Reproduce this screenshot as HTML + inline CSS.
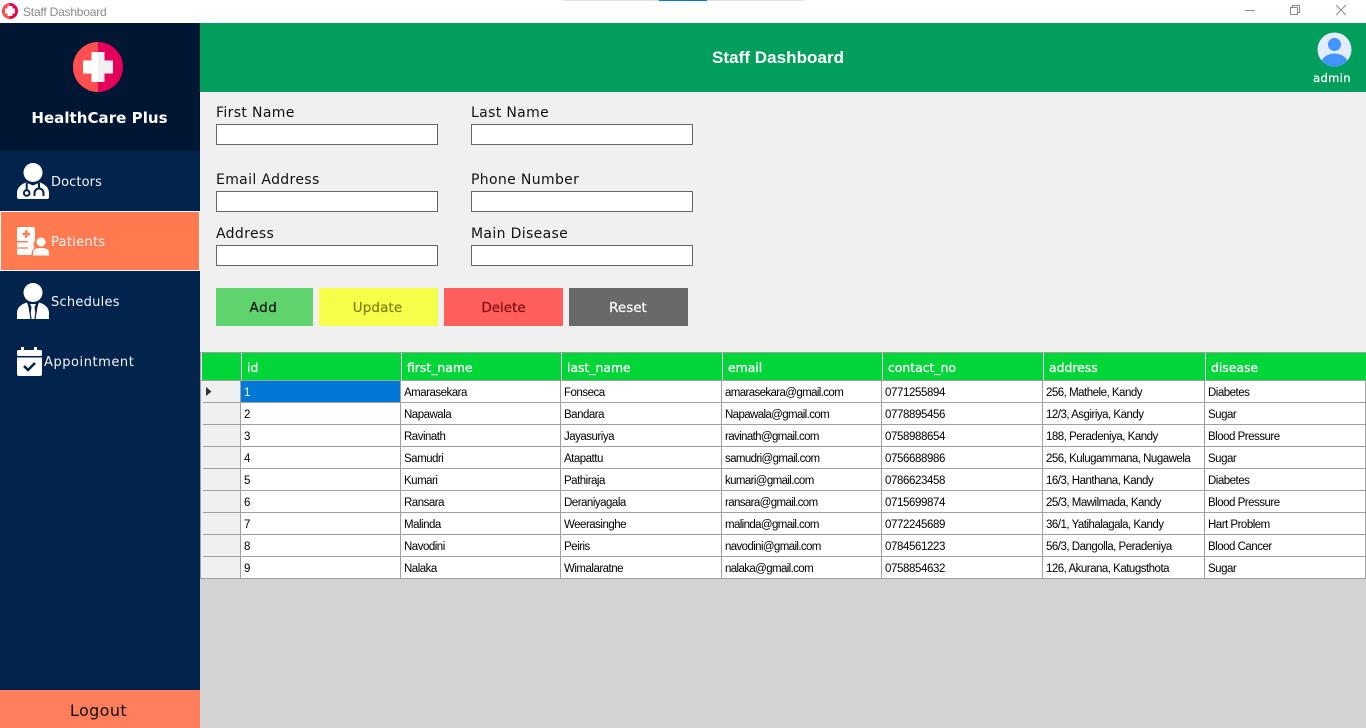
<!DOCTYPE html>
<html><head><meta charset="utf-8"><title>Staff Dashboard</title>
<style>
*{box-sizing:border-box}
html,body{margin:0;padding:0;width:1366px;height:728px;overflow:hidden;background:#fff}
body{position:relative;font-family:"DejaVu Sans","Liberation Sans",sans-serif}
.a{position:absolute;white-space:nowrap}
.lb{position:absolute;white-space:nowrap;font-size:14px;line-height:18px;color:#111;letter-spacing:.35px}
.in{position:absolute;width:222px;height:21px;background:#fff;border:1px solid #666}
.btn{position:absolute;top:288px;height:38px;text-align:center;font-size:13.5px;line-height:40px;-webkit-text-stroke:.2px currentColor}
.nav{position:absolute;left:51px;color:#f4f6fa;font-size:13px;line-height:18px;white-space:nowrap;letter-spacing:.1px}
table{position:absolute;left:200px;top:352px;width:1166px;table-layout:fixed;border-collapse:separate;border-spacing:0;font-family:"Liberation Sans",sans-serif;font-size:11.5px;letter-spacing:-.5px;color:#000;border-top:1px solid #a0a0a0;border-left:1px solid #a0a0a0}
th{height:28px;background:#00d637;color:#fff;font:12.4px "DejaVu Sans",sans-serif;letter-spacing:0;text-align:left;padding:2px 0 0 6px;border-right:1px solid #00d637;border-bottom:1px solid #a0a0a0;box-shadow:inset 1px 0 0 #fff;-webkit-text-stroke:.3px #fff}
td{height:22px;background:#fff;padding:3px 0 0 3px;border-right:1px solid #a0a0a0;border-bottom:1px solid #a0a0a0;white-space:nowrap;overflow:hidden}
td:nth-child(5){letter-spacing:-.62px}
td:nth-child(6){letter-spacing:-.4px}
td.h{background:#f0f0f0;border-bottom:0;position:relative;padding:0}
td.h:after{content:"";position:absolute;left:2px;right:0;bottom:0;height:1px;background:#a0a0a0}
tr:last-child td.h:after{left:-1px}
td.s{background:#0078d7;color:#fff}
</style></head><body>

<!-- title bar -->
<div class="a" style="left:0;top:0;width:1366px;height:23px;background:#fff"></div>
<svg class="a" style="left:2px;top:3px" width="16" height="16" viewBox="0 0 16 16"><circle cx="8" cy="8" r="8" fill="#e8004f"/><path d="M0 8a8 8 0 0 1 8-8v16a8 8 0 0 1-8-8z" fill="#ff4f4f"/><path d="M5.500 3h5v2.500H13v5h-2.500V13h-5v-2.500H3v-5h2.500z" fill="#fff"/></svg>
<div class="a" style="left:23px;top:4px;font:12px/16px 'Liberation Sans',sans-serif;color:#8a8a8a;letter-spacing:-.2px">Staff Dashboard</div>
<div class="a" style="left:563px;top:0;width:241px;height:1px;background:#e2e2e2"></div>
<div class="a" style="left:659px;top:0;width:48px;height:1px;background:#0078d7"></div>
<svg class="a" style="left:1240px;top:0" width="126" height="23" viewBox="0 0 126 23" fill="none" stroke="#8a8a8a" stroke-width="1"><path d="M5 10.500h10"/><path d="M50.500 7.500h7v7h-7zM52.500 7.500v-2h7v7h-2"/><path d="M96 5l10 10M106 5L96 15"/></svg>

<!-- sidebar -->
<div class="a" style="left:0;top:23px;width:200px;height:128px;background:#001733"></div>
<div class="a" style="left:0;top:151px;width:200px;height:539px;background:#02234b"></div>
<svg class="a" style="left:73px;top:42px" width="50" height="50" viewBox="0 0 50 50"><circle cx="25" cy="25" r="25" fill="#e4005a"/><path d="M25 0a25 25 0 0 0 0 50z" fill="#ff4f4f"/><path d="M18.500 10h13v8.500H40v13h-8.500V40h-13v-8.500H10v-13h8.500z" fill="#f0f0f0"/><path d="M18.500 10H25v30h-6.500v-8.500H10v-13h8.500z" fill="#fff"/></svg>
<div class="a" style="left:0;top:108px;width:199px;text-align:center;color:#fff;font-size:15px;line-height:20px;font-weight:bold;letter-spacing:.05px">HealthCare Plus</div>

<div class="a" style="left:0;top:211px;width:200px;height:60px;background:#ff7a4f;border:1px solid #fff"></div>

<!-- doctor -->
<svg class="a" style="left:17px;top:163px" width="32" height="37" viewBox="0 0 32 37"><circle cx="16" cy="9.500" r="9.500" fill="#fff"/><path d="M0 34v-4c0-6 5-9 9-10.500l7 3 7-3c4 1.500 9 4.500 9 10.500v4a2 2 0 0 1-2 2H2a2 2 0 0 1-2-2z" fill="#fff"/><g fill="none" stroke="#02234b" stroke-width="2"><circle cx="9.700" cy="30" r="2.800"/><path d="M9.700 27.200V20M22 20v5M17.500 33v-3a4.500 4.500 0 0 1 9 0v3"/></g></svg>
<div class="nav" style="top:174px">Doctors</div>

<!-- patients -->
<svg class="a" style="left:17px;top:227px" width="32" height="29" viewBox="0 0 32 29"><path d="M2 0h14a2 2 0 0 1 2 2v11.500a6 6 0 0 0-.5 7.500 7 7 0 0 0-3 6v1H2a2 2 0 0 1-2-2V2a2 2 0 0 1 2-2z" fill="#fff"/><path d="M5.500 5.800h2.500V3.300h2.500v2.500H13v2.500h-2.500v2.500H8V8.300H5.500z" fill="#ff7a4f"/><path d="M0 14.700h11M0 21h11" stroke="#ff7a4f" stroke-width="1.300"/><circle cx="24" cy="15" r="4.500" fill="#fff"/><path d="M16 28.500v-3c0-3 3-4.500 8-4.500s8 1.500 8 4.500v3z" fill="#fff"/></svg>
<div class="nav" style="top:234px;letter-spacing:.3px">Patients</div>

<!-- schedules -->
<svg class="a" style="left:17px;top:283px" width="32" height="37" viewBox="0 0 32 37"><circle cx="16" cy="9.500" r="9.500" fill="#fff"/><path d="M0 36v-6c0-6 5-9 10-10.500L16 36zM32 36v-6c0-6-5-9-10-10.500L16 36z" fill="#fff"/><path d="M13 21h6l-1.500 3 1.500 12h-6l1.500-12z" fill="#fff"/><path d="M11.500 20l2.500 16M20.500 20L18 36" stroke="#02234b" stroke-width="1.200"/></svg>
<div class="nav" style="top:294px;letter-spacing:.25px">Schedules</div>

<!-- appointment -->
<svg class="a" style="left:17px;top:347px" width="25" height="30" viewBox="0 0 25 30"><rect x="0" y="3" width="25" height="6" rx="1.500" fill="#fff"/><rect x="4" y="0" width="3" height="4" fill="#fff"/><rect x="17" y="0" width="3" height="4" fill="#fff"/><path d="M0 10.500h25V27a2 2 0 0 1-2 2H2a2 2 0 0 1-2-2z" fill="#fff"/><path d="M7 19l4 4 7-7" fill="none" stroke="#02234b" stroke-width="2.500"/></svg>
<div class="nav" style="left:44px;top:354px;letter-spacing:.55px">Appointment</div>

<div class="a" style="left:0;top:690px;width:200px;height:38px;background:#ff7f5c;text-align:center;font-size:16px;line-height:42px;color:#111;padding-right:3px;letter-spacing:.4px">Logout</div>

<!-- main -->
<div class="a" style="left:200px;top:92px;width:1166px;height:260px;background:#f0f0f0"></div>
<div class="a" style="left:200px;top:579px;width:1166px;height:149px;background:#d3d3d3"></div>
<div class="a" style="left:200px;top:23px;width:1166px;height:69px;background:#029e5b"></div>
<div class="a" style="left:712px;top:48px;font:bold 17px/20px 'Liberation Sans',sans-serif;color:#fff;letter-spacing:.05px">Staff Dashboard</div>
<svg class="a" style="left:1317px;top:32px" width="35" height="35" viewBox="0 0 35 35"><defs><clipPath id="c"><circle cx="17.500" cy="17.500" r="17"/></clipPath></defs><circle cx="17.500" cy="17.500" r="17" fill="#e3ecfd"/><circle cx="17.500" cy="12.500" r="6.500" fill="#4294ff"/><ellipse cx="17.500" cy="33" rx="14" ry="11.500" fill="#4294ff" clip-path="url(#c)"/></svg>
<div class="a" style="left:1300px;top:70px;width:64px;text-align:center;color:#fff;font-size:11.500px;line-height:16px;letter-spacing:.35px;-webkit-text-stroke:.25px #fff">admin</div>

<div class="lb" style="left:216px;top:104px">First Name</div>
<div class="in" style="left:216px;top:124px"></div>
<div class="lb" style="left:471px;top:104px">Last Name</div>
<div class="in" style="left:471px;top:124px"></div>
<div class="lb" style="left:216px;top:171px">Email Address</div>
<div class="in" style="left:216px;top:191px"></div>
<div class="lb" style="left:471px;top:171px">Phone Number</div>
<div class="in" style="left:471px;top:191px"></div>
<div class="lb" style="left:216px;top:225px">Address</div>
<div class="in" style="left:216px;top:245px"></div>
<div class="lb" style="left:471px;top:225px">Main Disease</div>
<div class="in" style="left:471px;top:245px"></div>

<div class="btn" style="left:216px;width:95px;background:#5fd36d;color:#111;box-shadow:2px 0 0 #5fd36d;letter-spacing:.6px">Add</div>
<div class="btn" style="left:319px;width:117px;background:#f5ff4a;color:#7c8010;box-shadow:2px 0 0 #f5ff4a;letter-spacing:.1px">Update</div>
<div class="btn" style="left:444px;width:119px;background:#ff5f5c;color:#7c0f12">Delete</div>
<div class="btn" style="left:569px;width:118px;background:#696969;color:#fff;box-shadow:1px 0 0 #696969">Reset</div>

<table>
<colgroup><col style="width:40px"><col style="width:160px"><col style="width:160px"><col style="width:161px"><col style="width:160px"><col style="width:161px"><col style="width:162px"><col style="width:161px"></colgroup>
<tr><th></th><th>id</th><th>first_name</th><th>last_name</th><th>email</th><th>contact_no</th><th>address</th><th>disease</th></tr>
<tr><td class="h"><svg style="position:absolute;left:5px;top:6px" width="6" height="9"><path d="M0 0l5.500 4.500L0 9z" fill="#333"/></svg></td><td class="s">1</td><td>Amarasekara</td><td>Fonseca</td><td>amarasekara@gmail.com</td><td>0771255894</td><td>256, Mathele, Kandy</td><td>Diabetes</td></tr>
<tr><td class="h"></td><td>2</td><td>Napawala</td><td>Bandara</td><td>Napawala@gmail.com</td><td>0778895456</td><td>12/3, Asgiriya, Kandy</td><td>Sugar</td></tr>
<tr><td class="h"></td><td>3</td><td>Ravinath</td><td>Jayasuriya</td><td>ravinath@gmail.com</td><td>0758988654</td><td>188, Peradeniya, Kandy</td><td>Blood Pressure</td></tr>
<tr><td class="h"></td><td>4</td><td>Samudri</td><td>Atapattu</td><td>samudri@gmail.com</td><td>0756688986</td><td>256, Kulugammana, Nugawela</td><td>Sugar</td></tr>
<tr><td class="h"></td><td>5</td><td>Kumari</td><td>Pathiraja</td><td>kumari@gmail.com</td><td>0786623458</td><td>16/3, Hanthana, Kandy</td><td>Diabetes</td></tr>
<tr><td class="h"></td><td>6</td><td>Ransara</td><td>Deraniyagala</td><td>ransara@gmail.com</td><td>0715699874</td><td>25/3, Mawilmada, Kandy</td><td>Blood Pressure</td></tr>
<tr><td class="h"></td><td>7</td><td>Malinda</td><td>Weerasinghe</td><td>malinda@gmail.com</td><td>0772245689</td><td>36/1, Yatihalagala, Kandy</td><td>Hart Problem</td></tr>
<tr><td class="h"></td><td>8</td><td>Navodini</td><td>Peiris</td><td>navodini@gmail.com</td><td>0784561223</td><td>56/3, Dangolla, Peradeniya</td><td>Blood Cancer</td></tr>
<tr><td class="h"></td><td>9</td><td>Nalaka</td><td>Wimalaratne</td><td>nalaka@gmail.com</td><td>0758854632</td><td>126, Akurana, Katugsthota</td><td>Sugar</td></tr>
</table>
</body></html>
